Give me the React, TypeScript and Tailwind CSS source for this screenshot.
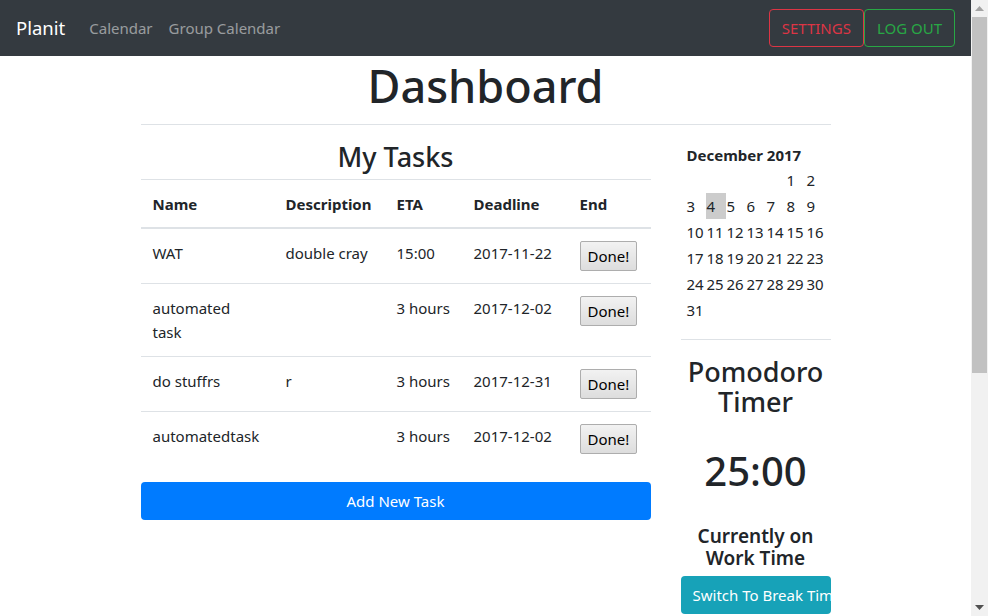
const tasks = [
  { name: 'WAT', desc: 'double cray', eta: '15:00', deadline: '2017-11-22' },
  { name: 'automated task', desc: '', eta: '3 hours', deadline: '2017-12-02' },
  { name: 'do stuffrs', desc: 'r', eta: '3 hours', deadline: '2017-12-31' },
  { name: 'automatedtask', desc: '', eta: '3 hours', deadline: '2017-12-02' },
]

// december 2017 starts on a friday
const days: (number | null)[] = [null, null, null, null, null, 1, 2]
for (let d = 3; d <= 31; d++) days.push(d)

function Navbar() {
  return (
    <nav className="h-14 shrink-0 bg-[#343a40] flex items-center px-4">
      <a className="text-[18.5px] text-white mr-4">Planit</a>
      <a className="px-2 text-white/50">Calendar</a>
      <a className="px-2 text-white/50">Group Calendar</a>
      <div className="ml-auto flex">
        <button className="h-[38px] px-3 border border-[#dc3545] text-[#dc3545] rounded">SETTINGS</button>
        <button className="h-[38px] px-3 border border-[#28a745] text-[#28a745] rounded">LOG OUT</button>
      </div>
    </nav>
  )
}

function TaskTable() {
  return (
    <table className="w-full table-fixed border-collapse text-left mb-4">
      <colgroup>
        <col className="w-[133px]" />
        <col className="w-[111px]" />
        <col className="w-[77px]" />
        <col className="w-[106px]" />
        <col className="w-[83px]" />
      </colgroup>
      <thead>
        <tr>
          {['Name', 'Description', 'ETA', 'Deadline', 'End'].map((h) => (
            <th key={h} className="pt-3 px-3 pb-[11px] font-bold border-t border-b-2 border-[#dee2e6] align-bottom">{h}</th>
          ))}
        </tr>
      </thead>
      <tbody>
        {tasks.map((t, i) => (
          <tr key={i} className="border-t border-[#dee2e6] align-top">
            <td className="p-3"><div className="max-w-[104px]">{t.name}</div></td>
            <td className="p-3">{t.desc}</td>
            <td className="p-3 whitespace-nowrap">{t.eta}</td>
            <td className="p-3 whitespace-nowrap">{t.deadline}</td>
            <td className="p-3">
              <button className="h-[30px] px-[7px] border border-[#adadad] rounded-[2px] bg-gradient-to-b from-[#f2f2f2] to-[#dddddd] text-black">Done!</button>
            </td>
          </tr>
        ))}
      </tbody>
    </table>
  )
}

function MiniCalendar() {
  return (
    <div className="pl-[5px] mt-[18px]">
      <div className="pl-[1px] text-[15px] font-bold leading-6">December 2017</div>
      <div className="grid grid-cols-[repeat(7,20px)]">
        {days.map((d, i) => (
          <div key={i} className={`h-[26px] leading-[26px] pl-[1px] ${d === 4 ? 'bg-[#cccccc]' : ''}`}>{d ?? ''}</div>
        ))}
      </div>
    </div>
  )
}

function Pomodoro() {
  return (
    <div className="text-center">
      <h3 className="text-[27px] leading-[30px] font-medium mt-[17px]">Pomodoro Timer</h3>
      <div className="text-[40px] leading-[48px] font-medium mt-[30px]">25:00</div>
      <h5 className="text-[19px] leading-[22px] font-semibold mt-[30px]">Currently on Work Time</h5>
      <button className="mt-[7px] w-full h-[38px] px-3 text-left whitespace-nowrap bg-[#17a2b8] text-white rounded">Switch To Break Time</button>
    </div>
  )
}

function Scrollbar() {
  return (
    <div className="w-[17px] shrink-0 bg-[#f1f1f1] flex flex-col items-center">
      <div className="h-[17px] flex items-center justify-center">
        <svg width="9" height="5" viewBox="0 0 9 5"><path d="M0 5L4.5 0L9 5Z" fill="#a3a3a3" /></svg>
      </div>
      <div className="w-[15px] h-[356px] bg-[#c1c1c1]" />
      <div className="flex-1" />
      <div className="h-[17px] flex items-center justify-center">
        <svg width="9" height="5" viewBox="0 0 9 5"><path d="M0 0L4.5 5L9 0Z" fill="#505050" /></svg>
      </div>
    </div>
  )
}

export default function App() {
  return (
    <div className="h-screen flex overflow-hidden bg-white text-[#212529] font-['Noto_Sans',sans-serif] text-[15px] leading-6">
      <div className="flex-1 min-w-0 flex flex-col">
        <Navbar />
        <div className="mx-auto w-[720px] px-[15px]">
          <h1 className="text-[45px] leading-[54px] font-medium text-center mt-[3px]">Dashboard</h1>
          <hr className="mt-[11px] border-t border-[#dee2e6]" />
          <div className="flex -mx-[15px]">
            <div className="w-[540px] px-[15px]">
              <h3 className="text-[27px] leading-[34px] font-medium text-center mt-[15px] mb-[5px]">My Tasks</h3>
              <TaskTable />
              <button className="w-full h-[38px] bg-[#007bff] text-white rounded">Add New Task</button>
            </div>
            <div className="w-[180px] px-[15px]">
              <MiniCalendar />
              <hr className="mt-[16px] border-t border-[#dee2e6]" />
              <Pomodoro />
            </div>
          </div>
        </div>
      </div>
      <Scrollbar />
    </div>
  )
}
